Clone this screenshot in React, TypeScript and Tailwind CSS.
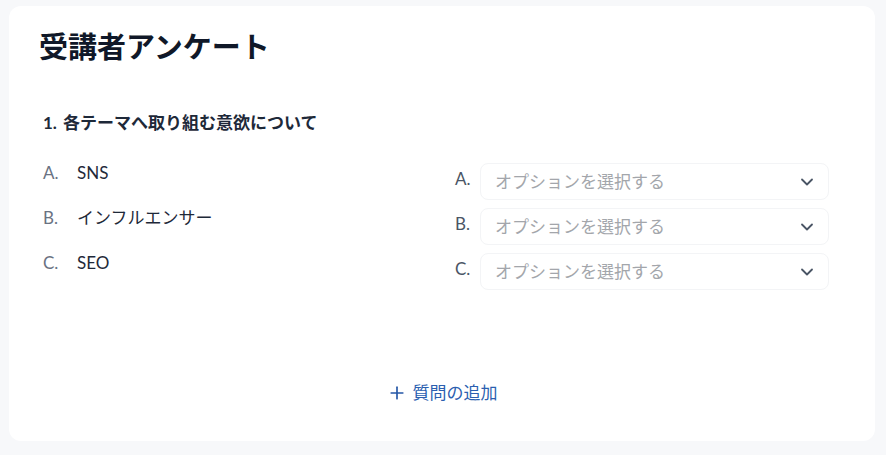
import { ChevronDown, Plus } from 'lucide-react';

const options = [
  { key: 'A', label: 'SNS' },
  { key: 'B', label: 'インフルエンサー' },
  { key: 'C', label: 'SEO' },
];

function SelectBox({ label }: { label: string }) {
  return (
    <div className="flex items-center">
      <span className="w-[25px] -translate-y-[3px] text-[17px] text-gray-600">{label}.</span>
      <div className="flex h-[37px] w-[349px] items-center justify-between rounded-lg border border-gray-100 bg-white pl-[14px] pr-[11px]">
        <span className="text-[17px] text-[#a3a6ab]">オプションを選択する</span>
        <ChevronDown className="h-[20px] w-[20px] text-gray-600" strokeWidth={2.2} />
      </div>
    </div>
  );
}

export default function App() {
  return (
    <div
      className="min-h-screen bg-[#f7f8fa] pl-[9px] pr-[11px] pt-[6px] pb-[14px]"
      style={{ fontFamily: 'Lato, "Noto Sans CJK JP", sans-serif' }}
    >
      <div className="flex h-[435px] flex-col rounded-xl bg-white pl-[30px] pr-[46px] pt-[21px]">
        <h1 className="text-[29px] font-bold leading-[40px] text-gray-900">受講者アンケート</h1>

        <h2 className="mt-[44px] flex pl-[4px] text-[17px] font-bold leading-[24px] text-gray-800">
          <span className="w-[20px]">1.</span>
          各テーマへ取り組む意欲について
        </h2>

        <div className="mt-[25px] flex">
          <div className="flex w-[416px] flex-col gap-[21px] pl-[4px] pt-[1px]">
            {options.map((o) => (
              <div key={o.key} className="flex h-[24px] items-center text-[17px]">
                <span className="w-[34px] text-gray-500">{o.key}.</span>
                <span className="text-gray-800">{o.label}</span>
              </div>
            ))}
          </div>
          <div className="mt-[3px] flex flex-col gap-[8px]">
            {options.map((o) => (
              <SelectBox key={o.key} label={o.key} />
            ))}
          </div>
        </div>

        <div className="mt-[90px] flex justify-center pl-[16px]">
          <button className="flex items-center gap-[6px] text-[17px] text-[#2c5fb0]">
            <Plus className="h-[20px] w-[20px] text-[#2557a7]" strokeWidth={2} />
            質問の追加
          </button>
        </div>
      </div>
    </div>
  );
}
